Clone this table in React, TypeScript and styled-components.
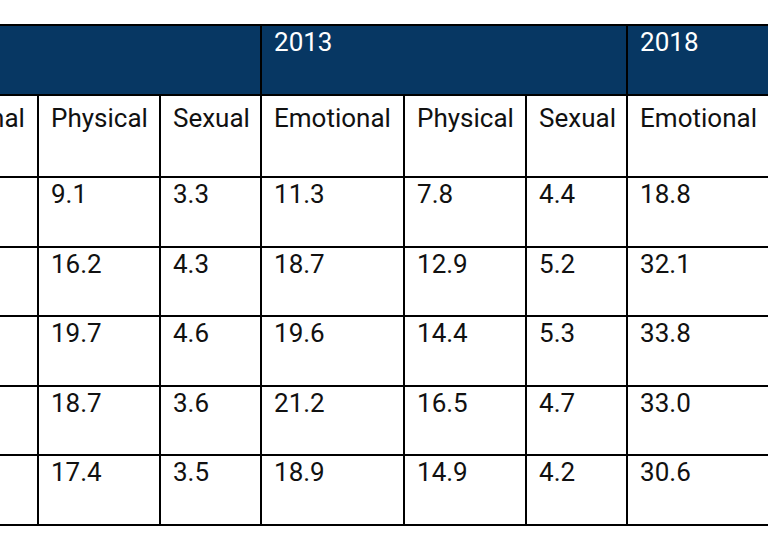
import React, { useLayoutEffect, useRef } from 'react';
import styled, { createGlobalStyle } from 'styled-components';

const GlobalStyle = createGlobalStyle`
  html, body {
    margin: 0;
    padding: 0;
    background: #ffffff;
  }
  body {
    font-family: Roboto, "Liberation Sans", Arial, sans-serif;
  }
`;

const Page = styled.div`
  padding-top: 24px;
  width: 768px;
`;

const Scroller = styled.div`
  width: 768px;
  overflow-x: auto;
  overflow-y: hidden;
  scrollbar-width: none;
  &::-webkit-scrollbar {
    display: none;
  }
`;

const Table = styled.table`
  border-collapse: collapse;
  table-layout: fixed;
  width: 1098px;
  font-family: Roboto, "Liberation Sans", Arial, sans-serif;
  font-size: 26px;
  line-height: normal;
  color: #111111;
`;

const GroupRow = styled.tr`
  height: 70px;
`;

const LabelRow = styled.tr`
  height: 82px;
`;

const DataRow = styled.tr`
  height: 69.6px;
`;

const GroupCell = styled.th`
  background: #073763;
  color: #ffffff;
  font-weight: 400;
  text-align: left;
  vertical-align: top;
  padding: 1px 12px 0;
  border: 2px solid #000000;
`;

const LabelCell = styled.th`
  font-weight: 400;
  text-align: left;
  vertical-align: top;
  padding: 7px 12px 0;
  border: 2px solid #000000;
  white-space: nowrap;
`;

const Cell = styled.td`
  text-align: left;
  vertical-align: top;
  padding: 1px 12px 0;
  border: 2px solid #000000;
`;

const Col = styled.col<{ $w: number }>`
  width: ${(p) => p.$w}px;
`;

const kinds = [
  { label: 'Emotional', width: 143 },
  { label: 'Physical', width: 122 },
  { label: 'Sexual', width: 101 },
];

const years = ['2008', '2013', '2018'];

// Values per row: [2008 E, P, S, 2013 E, P, S, 2018 E, P, S]; null where not shown
const rows: (string | null)[][] = [
  [null, '9.1', '3.3', '11.3', '7.8', '4.4', '18.8', null, null],
  [null, '16.2', '4.3', '18.7', '12.9', '5.2', '32.1', null, null],
  [null, '19.7', '4.6', '19.6', '14.4', '5.3', '33.8', null, null],
  [null, '18.7', '3.6', '21.2', '16.5', '4.7', '33.0', null, null],
  [null, '17.4', '3.5', '18.9', '14.9', '4.2', '30.6', null, null],
];

export default function App() {
  const scrollRef = useRef<HTMLDivElement>(null);

  useLayoutEffect(() => {
    if (scrollRef.current) {
      scrollRef.current.scrollLeft = 106;
    }
  }, []);

  return (
    <>
      <GlobalStyle />
      <Page>
        <Scroller ref={scrollRef}>
          <Table>
            <colgroup>
              {years.map((y) =>
                kinds.map((k) => <Col key={y + k.label} $w={k.width} />)
              )}
            </colgroup>
            <thead>
              <GroupRow>
                {years.map((y) => (
                  <GroupCell key={y} colSpan={3}>
                    {y}
                  </GroupCell>
                ))}
              </GroupRow>
              <LabelRow>
                {years.map((y) =>
                  kinds.map((k) => <LabelCell key={y + k.label}>{k.label}</LabelCell>)
                )}
              </LabelRow>
            </thead>
            <tbody>
              {rows.map((r, i) => (
                <DataRow key={i}>
                  {r.map((v, j) => (
                    <Cell key={j}>{v ?? ''}</Cell>
                  ))}
                </DataRow>
              ))}
            </tbody>
          </Table>
        </Scroller>
      </Page>
    </>
  );
}
